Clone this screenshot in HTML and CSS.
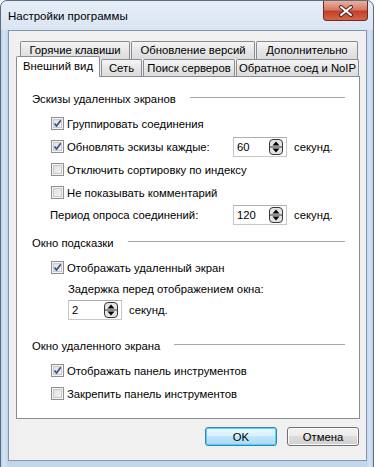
FILE: index.html
```html
<!DOCTYPE html>
<html lang="ru">
  <head>
    <meta charset="UTF-8" />
    <title>Настройки программы</title>
    <link rel="stylesheet" href="styles.css">
  </head>
  <body>
    <div class="window">
      <div class="titlebar">
        <span class="title">Настройки программы</span>
        <div class="close">
          <svg width="16" height="12" viewBox="0 0 16 12">
            <path d="M3 2 L13 10 M13 2 L3 10" stroke="#4a2a25" stroke-width="4" stroke-linecap="round"/>
            <path d="M3 2 L13 10 M13 2 L3 10" stroke="#ffffff" stroke-width="2" stroke-linecap="round"/>
          </svg>
        </div>
      </div>

      <div class="client">
        <div class="tab-row row1">
          <div class="tab" style="width: 110px">Горячие клавиши</div>
          <div class="tab" style="width: 124px">Обновление версий</div>
          <div class="tab" style="width: 102px">Дополнительно</div>
        </div>
        <div class="tab-row row2">
          <div class="tab selected" style="width: 84px">Внешний вид</div>
          <div class="tab" style="width: 41px">Сеть</div>
          <div class="tab" style="width: 92px">Поиск серверов</div>
          <div class="tab" style="width: 123px">Обратное соед и NoIP</div>
        </div>

        <div class="panel">
          <div class="group">Эскизы удаленных экранов</div>

          <div class="row cb-row">
            <span class="check on"></span>
            <span class="label">Группировать соединения</span>
          </div>
          <div class="row cb-row">
            <span class="check on"></span>
            <span class="label wide">Обновлять эскизы каждые:</span>
            <div class="spin"><span class="val">60</span><span class="arrows"></span></div>
            <span class="unit">секунд.</span>
          </div>
          <div class="row cb-row">
            <span class="check"></span>
            <span class="label">Отключить сортировку по индексу</span>
          </div>
          <div class="row cb-row">
            <span class="check"></span>
            <span class="label">Не показывать комментарий</span>
          </div>
          <div class="row period-row">
            <span class="label period">Период опроса соединений:</span>
            <div class="spin"><span class="val">120</span><span class="arrows"></span></div>
            <span class="unit">секунд.</span>
          </div>

          <div class="group g2">Окно подсказки</div>

          <div class="row cb-row">
            <span class="check on"></span>
            <span class="label">Отображать удаленный экран</span>
          </div>
          <div class="row sub-row">Задержка перед отображением окна:</div>
          <div class="row sub-row spin-row">
            <div class="spin"><span class="val">2</span><span class="arrows"></span></div>
            <span class="unit">секунд.</span>
          </div>

          <div class="group g3">Окно удаленного экрана</div>

          <div class="row cb-row">
            <span class="check on"></span>
            <span class="label">Отображать панель инструментов</span>
          </div>
          <div class="row cb-row short">
            <span class="check"></span>
            <span class="label">Закрепить панель инструментов</span>
          </div>
        </div>

        <div class="buttons">
          <button class="btn default">OK</button>
          <button class="btn">Отмена</button>
        </div>
      </div>
    </div>
  </body>
</html>
```

FILE: styles.css
```css
body {
  margin: 0;
  background: #ffffff;
  font-family: "Liberation Sans", Arial, sans-serif;
  font-size: 11.3px;
  color: #000000;
  overflow: hidden;
}
.window {
  width: 359px;
  height: 480px;
  padding: 0 6px 0 7px;
  border: 1px solid #5b6b80;
  border-radius: 7px 7px 0 0;
  background: linear-gradient(90deg, #b9cfe8, #d6e4f3 3px, #c3d7ec 6px, #c3d7ec calc(100% - 6px), #d6e4f3 calc(100% - 3px), #b9cfe8);
}
.titlebar {
  height: 29px;
  display: flex;
  justify-content: space-between;
  align-items: flex-start;
  background: linear-gradient(#e6eef7, #dae5f2);
  margin: 0 -6px 0 -7px;
  padding: 0 6px 0 7px;
  border-radius: 7px 7px 0 0;
}
.title {
  margin-top: 7px;
  line-height: 16px;
  font-size: 11.5px;
}
.close {
  width: 43px;
  height: 19px;
  margin-right: -1px;
  border: 1px solid #6d2b21;
  border-top: none;
  border-radius: 0 0 4px 4px;
  background: linear-gradient(#eab0a2, #d77a66 45%, #c2402a 55%, #d4654b);
  display: flex;
  align-items: center;
  justify-content: center;
}
.client {
  height: 429px;
  border: 1px solid #8396ad;
  background: #f0f0f0;
}
.tab-row {
  display: flex;
  gap: 1px;
}
.row1 {
  margin: 10px 0 0 11px;
  height: 18px;
}
.row2 {
  margin-left: 7px;
  height: 17px;
  align-items: flex-end;
}
.tab {
  box-sizing: border-box;
  height: 18px;
  flex-shrink: 0;
  border: 1px solid #898c95;
  border-bottom: none;
  border-radius: 2px 2px 0 0;
  background: linear-gradient(#f5f5f5, #e6e6e6 50%, #dcdcdc);
  text-align: center;
  line-height: 16px;
  white-space: nowrap;
}
.row2 .tab {
  height: 17px;
  line-height: 16px;
}
.row2 .tab.selected {
  position: relative;
  z-index: 2;
  height: 21px;
  margin-bottom: -1px;
  background: #ffffff;
  line-height: 18px;
}
.panel {
  box-sizing: border-box;
  height: 343px;
  margin: 0 6px 0 7px;
  border: 1px solid #898c95;
  background: #ffffff;
  padding-top: 14px;
}
.group {
  height: 16px;
  line-height: 16px;
  display: flex;
  align-items: center;
  padding: 0 14px 0 15px;
  margin-bottom: 5px;
}
.group::after {
  content: "";
  flex: 1;
  margin-left: 14px;
  margin-top: -3px;
  border-top: 1px solid #a8a8a8;
}
.g2 {
  margin-top: 9px;
}
.g3 {
  margin-top: 18px;
}
.row {
  display: flex;
  align-items: center;
}
.cb-row {
  height: 23px;
  padding-left: 34px;
}
.check {
  box-sizing: border-box;
  width: 13px;
  height: 13px;
  border: 1px solid #8e8f8f;
  background: linear-gradient(135deg, #dcdcdc, #f7f7f7);
  box-shadow: inset 0 0 0 1px #f4f4f4, inset 0 0 0 2px #c9c9c9;
  margin-right: 3px;
  flex-shrink: 0;
}
.check.on {
  background: url("data:image/svg+xml;utf8,<svg xmlns='http://www.w3.org/2000/svg' width='11' height='11'><path d='M2.5 5.5 L4.5 8 L8.8 2.2' fill='none' stroke='%233d528c' stroke-width='1.7'/></svg>") no-repeat center, linear-gradient(135deg, #dcdcdc, #f7f7f7);
}
.label.wide {
  width: 166px;
}
.period-row {
  height: 22px;
  padding-left: 33px;
}
.label.period {
  width: 183px;
}
.spin {
  box-sizing: border-box;
  width: 54px;
  height: 20px;
  border: 1px solid #c4c7cc;
  border-top-color: #abadb3;
  display: flex;
  align-items: center;
  padding: 0 3px 0 3px;
}
.val {
  flex: 1;
}
.arrows {
  width: 14px;
  height: 16px;
  background: url("data:image/svg+xml;utf8,<svg xmlns='http://www.w3.org/2000/svg' width='14' height='16'><rect x='0.5' y='0.5' width='13' height='15' rx='3.5' fill='%23e4e4e4' stroke='%23383838'/><line x1='1' y1='8' x2='13' y2='8' stroke='%23383838'/><path d='M7 2.5 L10.5 6.5 H3.5 Z' fill='%23000'/><path d='M3.5 9.5 H10.5 L7 13.5 Z' fill='%23000'/></svg>") no-repeat;
}
.unit {
  margin-left: 7px;
}
.sub-row {
  height: 20px;
  padding-left: 51px;
}
.spin-row {
  margin-top: 1px;
}
.buttons {
  display: flex;
  justify-content: flex-end;
  gap: 10px;
  margin: 8px 7px 0 0;
}
.btn {
  box-sizing: border-box;
  width: 72px;
  height: 19px;
  font-family: inherit;
  font-size: 11.3px;
  color: #000000;
  border: 1px solid #707070;
  border-radius: 3px;
  background: linear-gradient(#f2f2f2, #ebebeb 50%, #dddddd 50%, #cfcfcf);
  box-shadow: inset 0 0 0 1px #fcfcfc;
  padding: 0;
}
.btn.default {
  border-color: #3c7fb1;
  background: linear-gradient(#eaf6fd, #d9f0fc 50%, #bee6fd 50%, #a7d9f5);
  box-shadow: inset 0 0 0 1px #48d7fb;
}
```
